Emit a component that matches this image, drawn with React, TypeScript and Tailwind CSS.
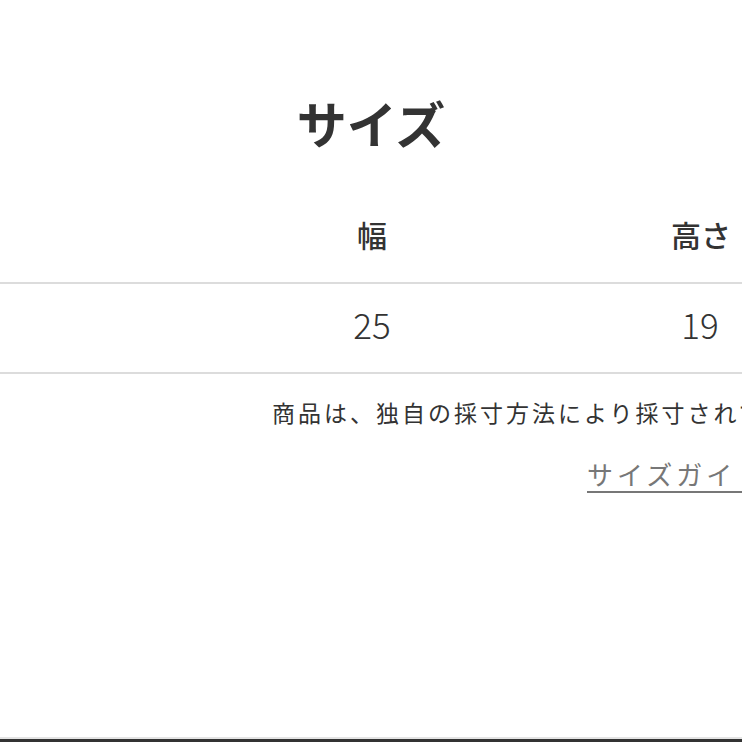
import React from "react";

export default function App() {
  return (
    <div
      className="relative w-[742px] h-[742px] overflow-hidden bg-white text-[#333333] flex flex-col"
      style={{ fontFamily: '"Noto Sans CJK JP", "Noto Sans", sans-serif' }}
    >
      <h1 className="pt-[97px] text-center text-[50px] leading-[50px] font-bold">サイズ</h1>

      <div className="mt-[72px] w-[864px] grid grid-cols-[208px_328px_328px] text-center">
        <div className="pb-[33px] text-[30px] leading-[30px] font-medium border-b-2 border-[#dcdcdc]"></div>
        <div className="pb-[33px] text-[30px] leading-[30px] font-medium border-b-2 border-[#dcdcdc]">幅</div>
        <div className="pb-[33px] text-[30px] leading-[30px] font-medium border-b-2 border-[#dcdcdc] pl-[2px]">高さ</div>

        <div className="pt-[20px] pb-[28px] text-[35px] leading-[40px] font-light border-b-2 border-[#dcdcdc]"></div>
        <div className="pt-[20px] pb-[28px] text-[35px] leading-[40px] font-light border-b-2 border-[#dcdcdc]">25</div>
        <div className="pt-[20px] pb-[28px] text-[35px] leading-[40px] font-light border-b-2 border-[#dcdcdc]">19</div>
      </div>

      <p className="mt-[23px] pl-[272px] whitespace-nowrap text-[23px] leading-[30px] tracking-[3px]">
        商品は、独自の採寸方法により採寸されています。
      </p>

      <div className="mt-[31px] pl-[587px] whitespace-nowrap">
        <a className="text-[26px] leading-[32px] tracking-[4px] text-[#777777] underline decoration-2 underline-offset-[6px]">
          サイズガイド
        </a>
      </div>

      <div className="mt-auto h-[5px] flex flex-col">
        <div className="h-[2px] bg-[#e4e4e4]"></div>
        <div className="flex-1 bg-[#333333]"></div>
      </div>
    </div>
  );
}
